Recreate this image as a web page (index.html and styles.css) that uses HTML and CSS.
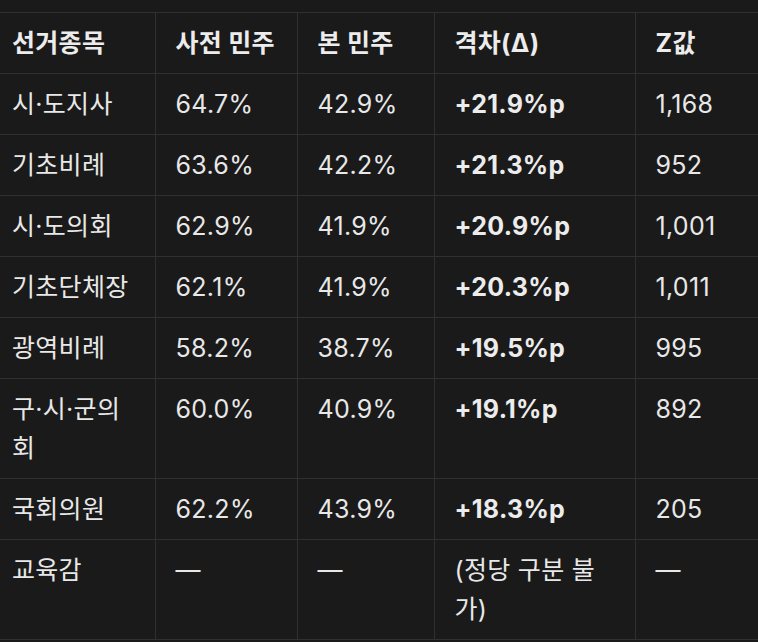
FILE: index.html
```html
<!DOCTYPE html>
<html lang="ko">
<head>
<meta charset="utf-8">
<title>선거종목별 사전·본 투표 민주 득표율</title>
<link rel="stylesheet" href="styles.css">
</head>
<body>
<div class="wrap">
<table class="data">
  <colgroup>
    <col class="c1"><col class="c2"><col class="c3"><col class="c4"><col class="c5">
  </colgroup>
  <thead>
    <tr><th>선거종목</th><th>사전 민주</th><th>본 민주</th><th>격차(Δ)</th><th>Z값</th></tr>
  </thead>
  <tbody>
    <tr><td>시·도지사</td><td>64.7%</td><td>42.9%</td><td><strong>+21.9%p</strong></td><td>1,168</td></tr>
    <tr><td>기초비례</td><td>63.6%</td><td>42.2%</td><td><strong>+21.3%p</strong></td><td>952</td></tr>
    <tr><td>시·도의회</td><td>62.9%</td><td>41.9%</td><td><strong>+20.9%p</strong></td><td>1,001</td></tr>
    <tr><td>기초단체장</td><td>62.1%</td><td>41.9%</td><td><strong>+20.3%p</strong></td><td>1,011</td></tr>
    <tr><td>광역비례</td><td>58.2%</td><td>38.7%</td><td><strong>+19.5%p</strong></td><td>995</td></tr>
    <tr><td>구·시·군의회</td><td>60.0%</td><td>40.9%</td><td><strong>+19.1%p</strong></td><td>892</td></tr>
    <tr><td>국회의원</td><td>62.2%</td><td>43.9%</td><td><strong>+18.3%p</strong></td><td>205</td></tr>
    <tr><td>교육감</td><td>—</td><td>—</td><td>(정당 구분 불가)</td><td>—</td></tr>
  </tbody>
</table>
</div>
</body>
</html>
```
FILE: styles.css
```css
html, body {
  margin: 0;
  padding: 0;
  background: #1a1a1a;
  overflow: hidden;
}
body {
  font-family: "Inter", "Noto Sans CJK KR", sans-serif;
  color: #e8e8e8;
  font-size: 25px;
  letter-spacing: 0.3px;
  line-height: 39px;
}
.wrap {
  padding-top: 12px;
  width: 758px;
  overflow: hidden;
}
.data {
  border-collapse: collapse;
  table-layout: fixed;
  width: 835px;
}
.c1 { width: 155px; }
.c2 { width: 142px; }
.c3 { width: 137px; }
.c4 { width: 201px; }
.c5 { width: 200px; }
.data th,
.data td {
  text-align: left;
  vertical-align: top;
  padding: 10.5px 20px;
  border-bottom: 1px solid #303030;
  border-left: 1px solid #303030;
}
.data th {
  font-weight: 700;
  border-top: 1px solid #303030;
  color: #ececec;
}
.data th:first-child,
.data td:first-child {
  border-left: none;
  padding-left: 12px;
}
.data strong {
  font-weight: 700;
  color: #ececec;
}
```
